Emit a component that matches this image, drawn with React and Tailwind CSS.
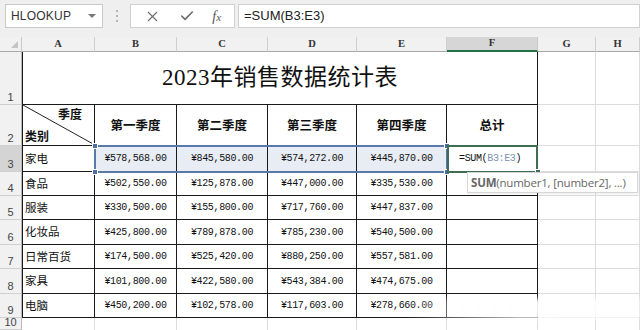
import React from 'react';
import { X, Check } from 'lucide-react';

const cols = ['A', 'B', 'C', 'D', 'E', 'F', 'G', 'H'];

const rows = [
  ['家电', '¥578,568.00', '¥845,580.00', '¥574,272.00', '¥445,870.00'],
  ['食品', '¥502,550.00', '¥125,878.00', '¥447,000.00', '¥335,530.00'],
  ['服装', '¥330,500.00', '¥155,800.00', '¥717,760.00', '¥447,837.00'],
  ['化妆品', '¥425,800.00', '¥789,878.00', '¥785,230.00', '¥540,500.00'],
  ['日常百货', '¥174,500.00', '¥525,420.00', '¥880,250.00', '¥557,581.00'],
  ['家具', '¥101,800.00', '¥422,580.00', '¥543,384.00', '¥474,675.00'],
  ['电脑', '¥450,200.00', '¥102,578.00', '¥117,603.00', '¥278,660.00'],
];

const sans = { fontFamily: '"Liberation Sans", Arial, sans-serif' };
const cjk = { fontFamily: '"Noto Sans CJK SC", sans-serif' };
const mono = { fontFamily: '"Liberation Mono", "Noto Sans CJK SC", monospace' };

const RowHead = ({ n, active }) => (
  <div
    className={`flex items-end justify-center border-r border-b border-r-[#b8b8b8] border-b-[#d0d0d0] text-[11px] leading-none pb-[1px] text-[#444] ${
      active ? 'bg-[#d4d4d4]' : 'bg-[#f1f1f1]'
    }`}
    style={sans}
  >
    {n}
  </div>
);

const Grid = ({ last }) => (
  <div className={`border-r border-b ${last ? 'border-b-0' : ''} border-[#dcdcdc] bg-white`} />
);

export default function App() {
  return (
    <div className="w-[640px] h-[330px] overflow-hidden bg-white relative select-none">
      {/* Formula bar */}
      <div className="h-[37px] bg-[#efefef] flex items-start pt-[4px] pl-[5px]">
        <div className="w-[98px] h-[24px] bg-white border border-[#c8c8c8] flex items-center pl-[5px] pr-[6px] justify-between">
          <span className="text-[12px] text-[#333] tracking-[0.2px]" style={sans}>HLOOKUP</span>
          <span className="w-0 h-0 border-l-[4px] border-r-[4px] border-t-[4px] border-l-transparent border-r-transparent border-t-[#7a7a7a]" />
        </div>
        <div className="w-[27px] h-[24px] flex flex-col items-center justify-center gap-[3px]">
          <span className="w-[2px] h-[2px] bg-[#b5b5b5]" />
          <span className="w-[2px] h-[2px] bg-[#b5b5b5]" />
          <span className="w-[2px] h-[2px] bg-[#b5b5b5]" />
        </div>
        <div className="w-[105px] h-[24px] bg-white border border-[#d0d0d0] flex items-center justify-around px-[4px]">
          <X size={17} strokeWidth={1.5} className="text-[#6b6b6b]" />
          <Check size={16} strokeWidth={2.4} className="text-[#6b6b6b]" />
          <span className="italic text-[14px] text-[#555]" style={{ fontFamily: '"Liberation Serif", serif' }}>
            f<span className="text-[11px]">x</span>
          </span>
        </div>
        <div className="ml-[3px] flex-1 h-[24px] bg-white border border-[#d0d0d0] flex items-center pl-[5px]">
          <span className="text-[13px] text-[#222]" style={sans}>=SUM(B3:E3)</span>
        </div>
      </div>

      {/* Sheet grid */}
      <div className="relative grid grid-cols-[22px_73px_82px_91px_89px_90px_91px_58px_1fr] grid-rows-[15px_53px_41px_26px_24px_24px_25px_24px_25px_24px_12px]">
        {/* Corner */}
        <div className="bg-[#f1f1f1] border-r border-b border-r-[#c8c8c8] border-b-[#a8a8a8] relative">
          <span className="absolute right-[3px] bottom-[3px] w-0 h-0 border-b-[7px] border-l-[7px] border-b-[#c4c4c4] border-l-transparent" />
        </div>
        {cols.map((c) => (
          <div
            key={c}
            className={`flex items-center justify-center text-[10.5px] font-bold leading-none ${
              c === 'F'
                ? 'bg-[#d6d6d6] border-b-2 border-b-[#217346] border-r border-r-[#c8c8c8]'
                : 'bg-[#f1f1f1] border-b border-b-[#a8a8a8] border-r border-r-[#cfcfcf]'
            }`}
            style={{ fontFamily: '"Liberation Serif", serif', color: '#333' }}
          >
            {c}
          </div>
        ))}

        {/* Row 1 title */}
        <RowHead n={1} />
        <div className="col-span-6 border-l border-r border-b border-[#1a1a1a] flex items-center justify-center bg-white">
          <span className="text-[23px] text-[#111] tracking-[0.5px]" style={{ fontFamily: '"Liberation Serif", "Noto Sans CJK SC", serif' }}>
            2023年销售数据统计表
          </span>
        </div>
        <Grid />
        <Grid />

        {/* Row 2 headers */}
        <RowHead n={2} />
        <div className="relative border-l border-r border-b border-[#1a1a1a] bg-white" style={cjk}>
          <svg className="absolute inset-0" width="72" height="40" viewBox="0 0 72 40">
            <line x1="0" y1="0" x2="72" y2="40" stroke="#222" strokeWidth="1" />
          </svg>
          <span className="absolute right-[12px] top-[3px] text-[12px] font-bold leading-none text-[#111]">季度</span>
          <span className="absolute left-[2px] bottom-[3px] text-[12px] font-bold leading-none text-[#111]">类别</span>
        </div>
        {['第一季度', '第二季度', '第三季度', '第四季度', '总计'].map((h) => (
          <div
            key={h}
            className="flex items-center justify-center border-r border-b border-[#1a1a1a] bg-white text-[12.5px] font-bold text-[#111]"
            style={cjk}
          >
            {h}
          </div>
        ))}
        <Grid />
        <Grid />

        {/* Data rows */}
        {rows.map((r, i) => (
          <React.Fragment key={r[0]}>
            <RowHead n={i + 3} active={i === 0} />
            <div
              className="flex items-center pl-[2px] border-l border-r border-b border-[#1a1a1a] bg-white text-[11.5px] text-[#111]"
              style={cjk}
            >
              {r[0]}
            </div>
            {r.slice(1).map((v, j) => (
              <div
                key={j}
                className={`flex items-center justify-center border-r border-b border-[#1a1a1a] text-[10px] tracking-[-0.35px] text-[#111] ${
                  i === 0 ? 'bg-[#e8edf5]' : 'bg-white'
                }`}
                style={mono}
              >
                {v}
              </div>
            ))}
            <div
              className="flex items-center pl-[12px] border-r border-b border-[#1a1a1a] bg-white text-[10px] tracking-[-0.35px] text-[#111]"
              style={mono}
            >
              {i === 0 && (
                <span>
                  =SUM(<span className="text-[#7d8fae]">B3:E3</span>)
                </span>
              )}
            </div>
            <Grid />
            <Grid />
          </React.Fragment>
        ))}

        {/* Row 10 */}
        <RowHead n={10} />
        {cols.map((c) => (
          <Grid key={c} last />
        ))}

        {/* Range reference highlight B3:E3 */}
        <div className="absolute left-[94px] top-[108px] w-[354px] h-[28px] border-2 border-[#5a78a8] pointer-events-none" />
        {[
          'left-[92px] top-[106px]',
          'left-[444px] top-[106px]',
          'left-[92px] top-[132px]',
          'left-[444px] top-[132px]',
        ].map((p) => (
          <div key={p} className={`absolute ${p} w-[6px] h-[6px] bg-[#4f6fa3] border border-white`} />
        ))}

        {/* Active cell F3 */}
        <div className="absolute left-[447px] top-[108px] w-[91px] h-[28px] border-2 border-[#3f6e51] pointer-events-none" />
        <div className="absolute left-[535px] top-[132px] w-[6px] h-[6px] bg-[#3f6e51] border border-white" />

        {/* Function tooltip */}
        <div className="absolute left-[467px] top-[135px] w-[171px] h-[21px] bg-white border border-[#d6d6d6] shadow-[1px_1px_2px_rgba(0,0,0,0.08)] flex items-center pl-[3px]">
          <span className="text-[11.5px] text-[#666] whitespace-nowrap tracking-[-0.2px]" style={{ fontFamily: '"Open Sans", "Liberation Sans", sans-serif' }}>
            <span className="font-bold">SUM</span>(number1, [number2], ...)
          </span>
        </div>

        {/* Watermark smear */}
        <div className="absolute left-[405px] top-[262px] w-[235px] h-[20px] bg-gradient-to-r from-white/0 via-white/95 to-white/80 blur-[2px]" />
      </div>
    </div>
  );
}
